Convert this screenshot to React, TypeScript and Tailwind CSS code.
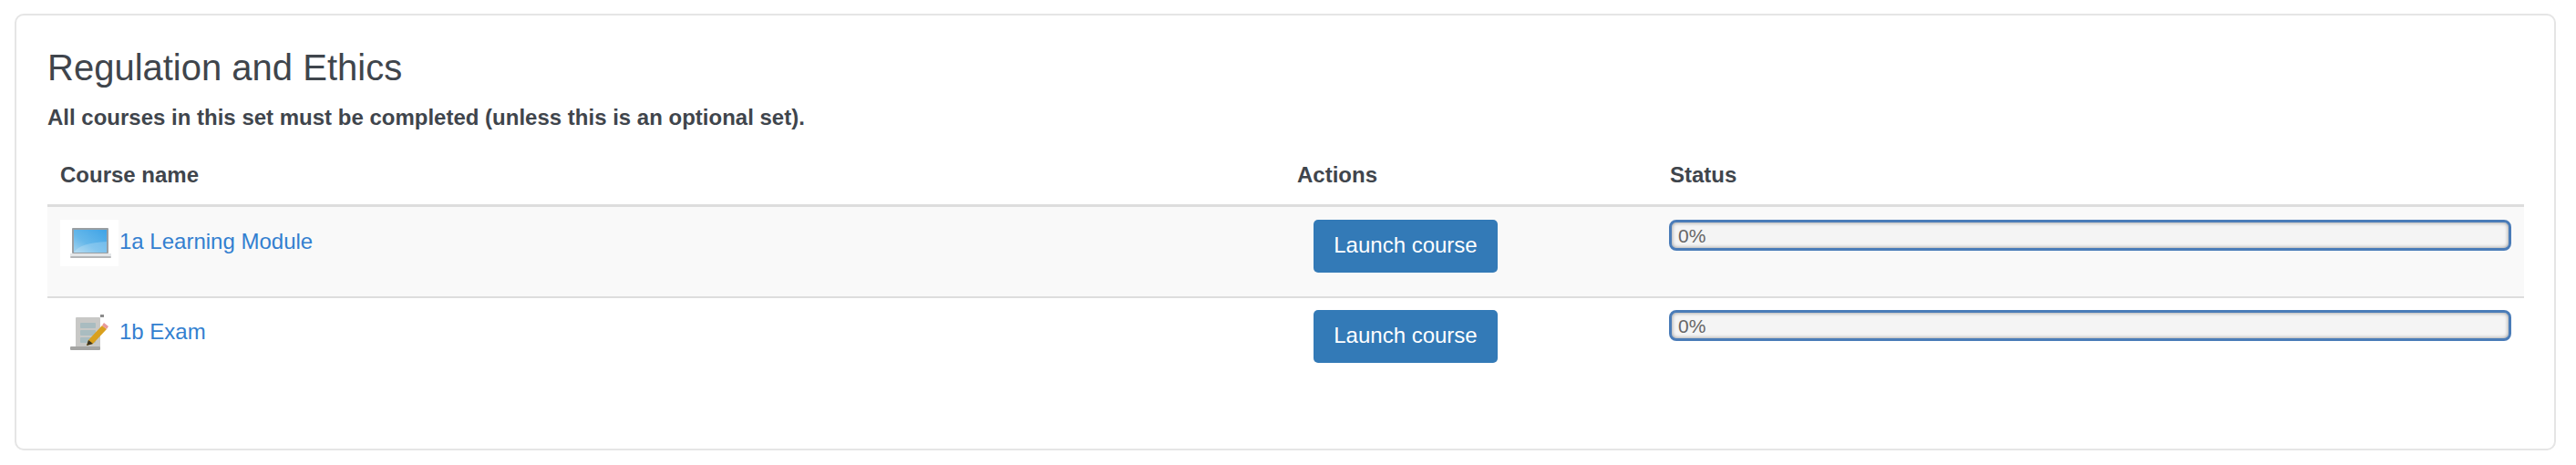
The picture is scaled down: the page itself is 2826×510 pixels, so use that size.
import React from 'react';

interface Course {
  name: string;
  kind: 'laptop' | 'exam';
}

const courses: Course[] = [
  { name: '1a Learning Module', kind: 'laptop' },
  { name: '1b Exam', kind: 'exam' },
];

const LaptopIcon = () => (
  <svg width="64" height="51" viewBox="0 0 64 51" className="blur-[0.5px]">
    <defs>
      <linearGradient id="screen" x1="1" y1="0" x2="0" y2="1">
        <stop offset="0" stopColor="#3fa3e6" />
        <stop offset="0.6" stopColor="#66b8ea" />
        <stop offset="1" stopColor="#a5d4ef" />
      </linearGradient>
    </defs>
    <rect x="13" y="9" width="40" height="28" rx="1" fill="#9a9fa3" />
    <rect x="15" y="11" width="36" height="25" fill="url(#screen)" />
    <path d="M15 36 C20 28 32 25 51 24 V36 Z" fill="#fff" opacity="0.2" />
    <rect x="11" y="37" width="45" height="3" fill="#e4e6e8" />
    <rect x="11" y="40" width="45" height="2" rx="1" fill="#b4b6b8" />
  </svg>
);

const ExamIcon = () => (
  <svg width="64" height="51" viewBox="0 0 64 51" className="blur-[0.5px]">
    <rect x="17" y="8" width="27" height="33" rx="1" fill="#c8c8c6" />
    <rect x="22" y="14" width="17" height="6" rx="1" fill="#a9bcc0" />
    <rect x="22" y="22" width="17" height="6" rx="1" fill="#a9bcc0" />
    <rect x="22" y="30" width="17" height="6" rx="1" fill="#a9bcc0" />
    <rect x="11" y="40" width="33" height="4" rx="1" fill="#a4a4a2" />
    <path d="M31 33 L46 17 L51 21 L36 37 L29 39 Z" fill="#d9a01e" />
    <path d="M31 33 L36 37 L29 39 Z" fill="#3a3320" />
    <path d="M46 17 L48 14 L53 18 L51 21 Z" fill="#e79a9a" />
    <rect x="44" y="5" width="4" height="3" fill="#8c8c8c" />
  </svg>
);

export default function App() {
  return (
    <div className="h-[510px] bg-white pt-[15px] pl-[16px] pr-[22px] font-['Liberation_Sans',Arial,sans-serif] text-[#3f454c]">
      <div className="h-[479px] rounded-[10px] border-2 border-[#e5e5e5] pt-[33px] pl-[34px] pr-[33px]">
        <h3 className="text-[40px] leading-[48px]">Regulation and Ethics</h3>
        <p className="mt-[14px] text-[24px] leading-[34px] font-bold">
          All courses in this set must be completed (unless this is an optional set).
        </p>
        <div className="mt-[13px] grid h-[68px] grid-cols-[1357px_409px_1fr] border-b-[3px] border-[#dddddd] text-[24px] leading-[34px] font-bold">
          <div className="pl-[14px] pt-[16px]">Course name</div>
          <div className="pl-[14px] pt-[16px]">Actions</div>
          <div className="pl-[14px] pt-[16px]">Status</div>
        </div>
        {courses.map((course, i) => (
          <div
            key={course.name}
            className={
              i === 0
                ? 'grid h-[100px] grid-cols-[1357px_409px_1fr] border-b-2 border-[#dddddd] bg-[#f9f9f9] pt-[14px]'
                : 'grid h-[100px] grid-cols-[1357px_409px_1fr] pt-[13px]'
            }
          >
            <div className="flex items-start pl-[14px]">
              <div className={i === 0 ? 'bg-white' : ''}>
                {course.kind === 'laptop' ? <LaptopIcon /> : <ExamIcon />}
              </div>
              <a className="ml-[1px] mt-[9px] text-[24px] leading-[30px] text-[#337fd0]">{course.name}</a>
            </div>
            <div className="pl-[32px]">
              <button className="h-[58px] w-[202px] rounded-[5px] bg-[#337ab7] pb-[2px] text-[24px] text-white">
                Launch course
              </button>
            </div>
            <div className="pl-[13px] pr-[14px]">
              <div className="h-[34px] rounded-[8px] border-[3px] border-[#4a7cb8] bg-[#f4f4f4] pl-[7px] text-[21px] leading-[30px] text-[#666666] shadow-[inset_0_0_4px_#8a8a8a]">
                0%
              </div>
            </div>
          </div>
        ))}
      </div>
    </div>
  );
}
